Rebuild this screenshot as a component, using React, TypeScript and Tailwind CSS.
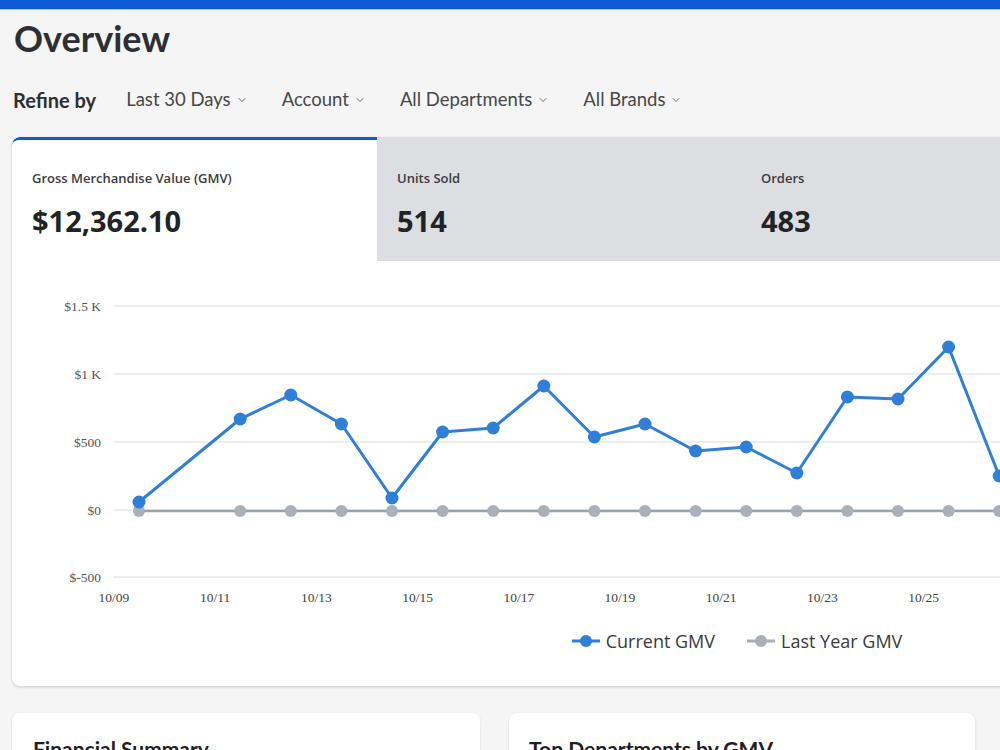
import React from 'react';
import { ChevronDown } from 'lucide-react';

const filters = ['Last 30 Days', 'Account', 'All Departments', 'All Brands'];

const tabs = [
  { label: 'Gross Merchandise Value (GMV)', value: '$12,362.10', w: 'w-[365px]' },
  { label: 'Units Sold', value: '514', w: 'w-[364px]' },
  { label: 'Orders', value: '483', w: 'w-[364px]' },
  { label: 'Conversion Rate', value: '4.2%', w: 'w-[364px]' },
];

// y positions in page pixels, index = day since 10/09 (10/10 has no point)
const current: [number, number][] = [
  [0, 502], [2, 419], [3, 395], [4, 424], [5, 498], [6, 432], [7, 428], [8, 386], [9, 437],
  [10, 424], [11, 451], [12, 447], [13, 473], [14, 397], [15, 399], [16, 347], [17, 476],
  [18, 440], [19, 421], [20, 455],
];

const dayX = (i: number) => 139 + i * 50.6;

const yTicks = [
  { label: '$1.5 K', y: 306 },
  { label: '$1 K', y: 374 },
  { label: '$500', y: 442 },
  { label: '$0', y: 510 },
  { label: '$-500', y: 577 },
];

const xTicks = ['10/09', '10/11', '10/13', '10/15', '10/17', '10/19', '10/21', '10/23', '10/25', '10/27', '10/29'];

function Chart() {
  const pts = current.map(([i, y]) => `${dayX(i)},${y}`).join(' ');
  const grayPts = current.map(([i]) => `${dayX(i)},511`).join(' ');
  return (
    <svg width="1450" height="355" className="block" style={{ fontFamily: '"Liberation Serif", serif' }}>
      <g transform="translate(-12,-261)">
        {yTicks.map((t) => (
          <g key={t.label}>
            <line x1="113" x2="1440" y1={t.y} y2={t.y} stroke="#e8e8e8" strokeWidth="1.5" />
            <text x="101" y={t.y + 4.5} textAnchor="end" fontSize="13.5" fill="#555">
              {t.label}
            </text>
          </g>
        ))}
        {xTicks.map((t, k) => (
          <text key={t} x={114 + k * 101.2} y="602" textAnchor="middle" fontSize="13.5" fill="#444">
            {t}
          </text>
        ))}
        <polyline points={grayPts} fill="none" stroke="#9aa3ad" strokeWidth="2.5" />
        {current.map(([i]) => (
          <circle key={'g' + i} cx={dayX(i)} cy="511" r="6" fill="#a9b0b9" />
        ))}
        <polyline points={pts} fill="none" stroke="#2f7fd8" strokeWidth="3" strokeLinejoin="round" />
        {current.map(([i, y]) => (
          <circle key={'b' + i} cx={dayX(i)} cy={y} r="6.5" fill="#2f7fd8" />
        ))}
      </g>
    </svg>
  );
}

function LegendItem({ color, label }: { color: string; label: string }) {
  return (
    <div className="flex items-center gap-[6px]">
      <svg width="28" height="14">
        <line x1="0" x2="28" y1="7" y2="7" stroke={color} strokeWidth="3" />
        <circle cx="14" cy="7" r="6" fill={color} />
      </svg>
      <span className="text-[18px] text-[#3a3a3a]">{label}</span>
    </div>
  );
}

export default function App() {
  return (
    <div className="w-[1000px] h-[750px] overflow-hidden bg-[#f5f5f5]" style={{ fontFamily: '"Open Sans", sans-serif' }}>
      <div className="h-[9px] bg-[#0f5bd3]" />
      <div className="h-px bg-[#8ad7f2]" />

      <div className="px-3">
        <h1 className="mt-2 ml-[2px] text-[36px] leading-[40px] font-bold text-[#2e2f32]" style={{ fontFamily: 'Lato, sans-serif' }}>
          Overview
        </h1>

        <div className="mt-7 flex items-center h-7 gap-[30px]" style={{ fontFamily: 'Lato, sans-serif' }}>
          <span className="ml-px text-[20px] font-bold text-[#2e2f32]">Refine by</span>
          <div className="flex items-center gap-[34px] text-[18.5px]">
            {filters.map((f) => (
              <div key={f} className="flex items-center gap-[5px] text-[#46474a]">
                <span>{f}</span>
                <ChevronDown size={12} strokeWidth={1.6} />
              </div>
            ))}
          </div>
        </div>

        <div className="mt-[23px] w-[1450px] rounded-lg bg-white shadow-[0_1px_3px_rgba(0,0,0,0.18)] overflow-hidden">
          <div className="flex h-[124px]">
            {tabs.map((t, i) => (
              <div
                key={t.label}
                className={
                  i === 0
                    ? `${t.w} shrink-0 pl-5 pt-[29px] bg-white border-t-[3px] border-[#0f5bd3] rounded-tl-lg`
                    : `${t.w} shrink-0 pl-5 pt-[32px] bg-[#dcdee1]`
                }
              >
                <div className="text-[13px] leading-[18px] font-semibold text-[#3b3c3f]">{t.label}</div>
                <div className="mt-4 text-[29px] leading-[36px] font-bold text-[#222326]">{t.value}</div>
              </div>
            ))}
          </div>

          <Chart />

          <div className="mt-[13px] pb-[33px] flex justify-center gap-8 h-6 box-content items-center">
            <LegendItem color="#2f7fd8" label="Current GMV" />
            <LegendItem color="#a9b0b9" label="Last Year GMV" />
          </div>
        </div>

        <div className="mt-[27px] flex gap-[29px]">
          <div className="w-[468px] h-[120px] rounded-lg bg-white shadow-[0_1px_3px_rgba(0,0,0,0.12)] px-[21px] pt-6">
            <h2 className="text-[21px] leading-6 font-bold text-[#1f2023]" style={{ fontFamily: 'Lato, sans-serif' }}>
              Financial Summary
            </h2>
          </div>
          <div className="w-[466px] h-[120px] rounded-lg bg-white shadow-[0_1px_3px_rgba(0,0,0,0.12)] px-[20px] pt-6">
            <h2 className="text-[21px] leading-6 font-bold text-[#1f2023]" style={{ fontFamily: 'Lato, sans-serif' }}>
              Top Departments by GMV
            </h2>
          </div>
        </div>
      </div>
    </div>
  );
}
